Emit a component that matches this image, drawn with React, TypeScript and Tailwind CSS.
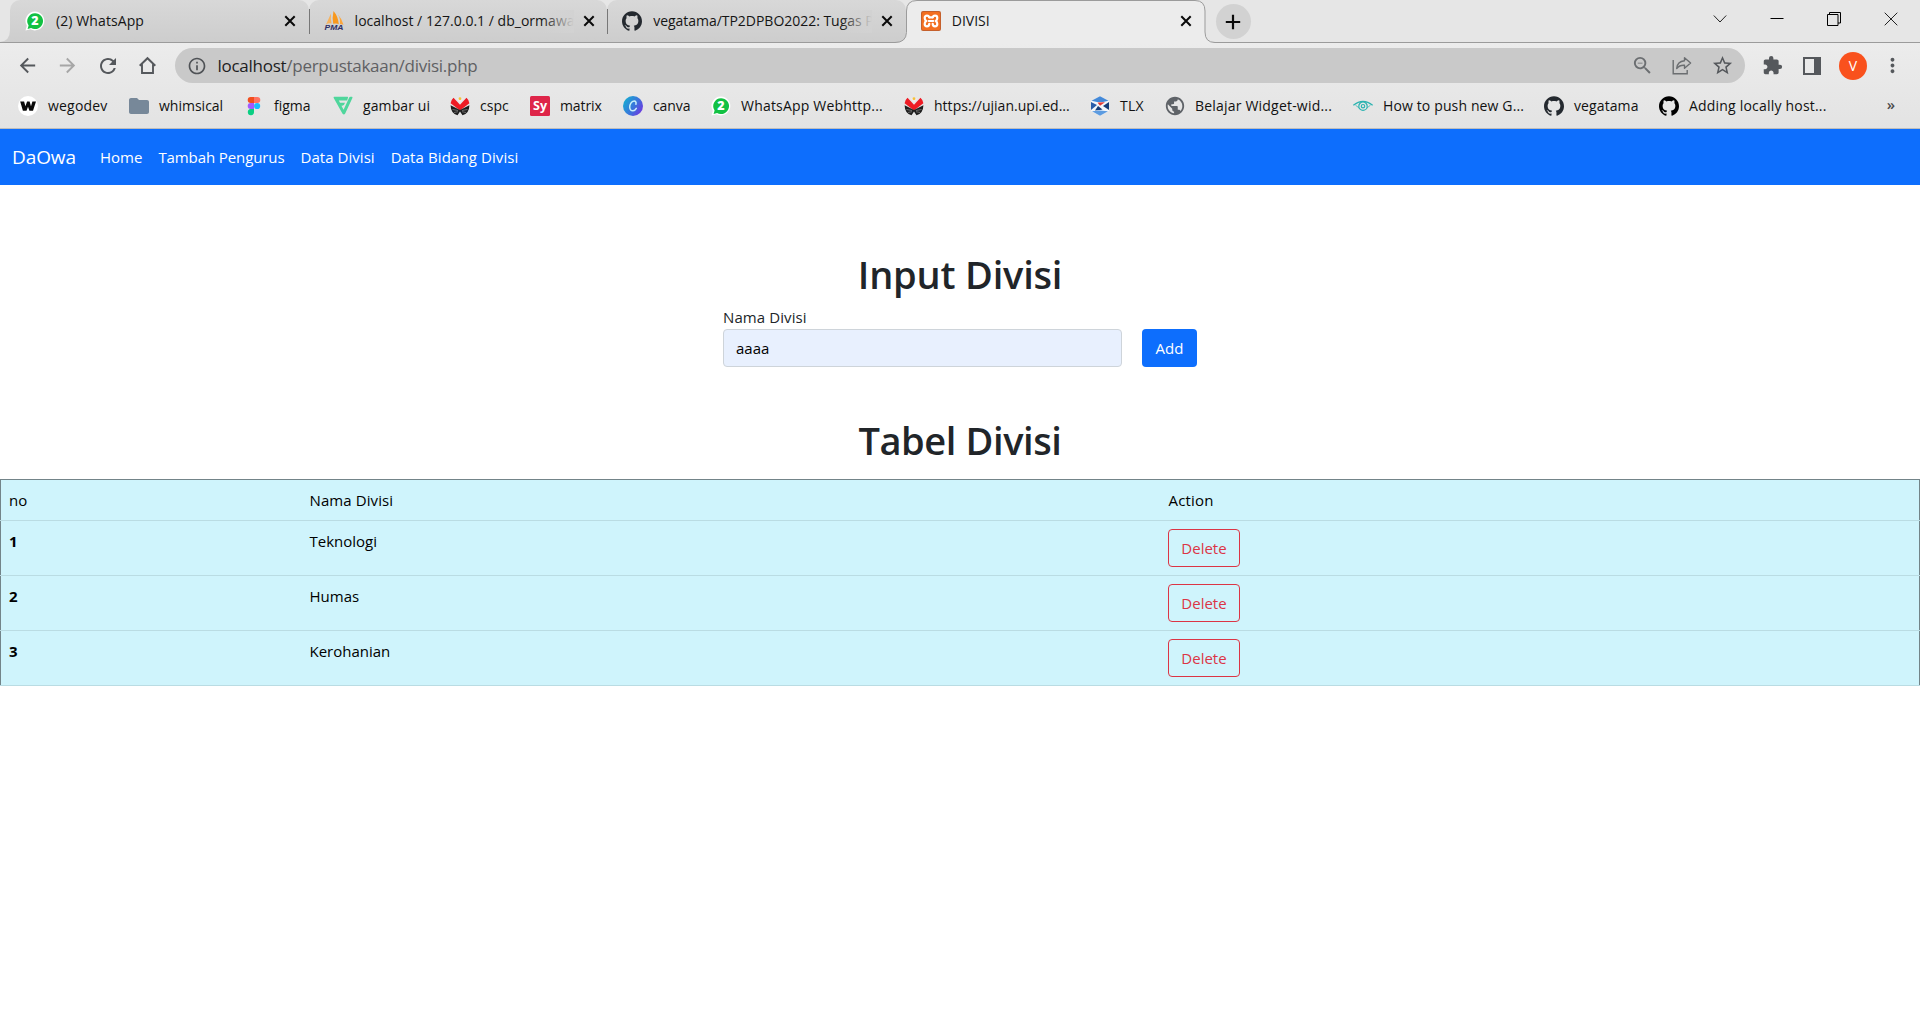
import type { ReactNode } from "react";
import { MdArrowBack, MdArrowForward, MdRefresh, MdInfoOutline, MdZoomOut, MdStarBorder, MdExtension, MdMoreVert, MdFolder, MdPublic } from "react-icons/md";
import { SiGithub } from "react-icons/si";

function WhatsAppIcon() {
  return (
    <svg viewBox="0 0 20 20" className="size-5 shrink-0">
      <path d="M10 .6a9.4 9.4 0 1 1-4.5 17.7L.5 19.6l1.3-4.9A9.4 9.4 0 0 1 10 .6z" fill="#fff" />
      <path d="M10 2.2a7.9 7.9 0 1 1-3.9 14.7L2.6 18l1-3.5A7.9 7.9 0 0 1 10 2.2z" fill="#12c143" />
      <text x="10" y="14.4" textAnchor="middle" fontSize="12.5" fontWeight="800" fill="#fff" fontFamily="Open Sans, sans-serif">2</text>
    </svg>
  );
}

function PmaIcon() {
  return (
    <svg viewBox="0 0 20 20" className="size-5 shrink-0 overflow-visible">
      <path d="M7 2.5 2 13.4q3-1.6 5.6-.8Q6.4 8 7 2.5z" fill="#f7b25c" />
      <path d="M9.5 0Q8 7 9.2 12.8q3.8-.8 5.6.4Q14 5 9.5 0z" fill="#f8981d" />
      <path d="M14 3.5q2.5 4 2 9.6l3.5.6Q18 8 14 3.5z" fill="#fba63c" />
      <text x="10" y="19.4" textAnchor="middle" fontSize="7" fontWeight="800" fontStyle="italic" textLength="19" lengthAdjust="spacingAndGlyphs" fill="#2f2f63" fontFamily="Liberation Sans, sans-serif">PMA</text>
    </svg>
  );
}

function XamppIcon() {
  return (
    <svg viewBox="0 0 20 20" className="size-5 shrink-0">
      <rect width="20" height="20" rx="2" fill="#c5602c" />
      <rect x="1" y="1" width="18" height="18" rx="1.5" fill="#f37021" />
      <g fill="none" stroke="#fff" strokeWidth="2.2" strokeLinecap="round" strokeLinejoin="round">
        <path d="M8.3 6.300Q7.800 4.700 6 4.700 3.700 4.700 3.700 7 3.700 9 5.200 10 3.700 11 3.700 13 3.700 15.300 6 15.300 8.300 15.300 8.300 12.800" />
        <path d="M11.700 6.300Q12.200 4.700 14 4.700 16.300 4.700 16.300 7 16.300 9 14.800 10 16.300 11 16.300 13 16.300 15.300 14 15.300 11.700 15.300 11.700 12.800" />
        <path d="M8.300 6.300h3.400M7.700 10h4.600" />
      </g>
    </svg>
  );
}

function WegodevIcon() {
  return (
    <svg viewBox="0 0 20 20" className="size-5 shrink-0">
      <circle cx="10" cy="10" r="10" fill="#fff" />
      <path d="M2.2 5.5h3.9l1.3 4.8 1.7-4.8h2.5l1.4 4.8 1.4-4.8h3.6L15 14.7h-3.6L10 10.8l-1.5 3.9H4.9z" fill="#0b0b0b" />
    </svg>
  );
}

function FigmaIcon() {
  return (
    <svg viewBox="0 0 20 20" className="size-5 shrink-0">
      <path d="M10 1H6.7a3 3 0 0 0 0 6H10z" fill="#f24e1e" />
      <path d="M10 1h3.3a3 3 0 0 1 0 6H10z" fill="#ff7262" />
      <path d="M10 7H6.7a3 3 0 0 0 0 6H10z" fill="#a259ff" />
      <circle cx="13.1" cy="10" r="3.1" fill="#1abcfe" />
      <path d="M10 13H6.7a3.1 3.1 0 1 0 3.3 3z" fill="#0acf83" />
    </svg>
  );
}

function GambarIcon() {
  return (
    <svg viewBox="0 0 20 20" className="size-5 shrink-0">
      <path d="M1.300.800h13.200q1 0 .5 1l-.9 2.600H5.800l1.200 2.300H12q-.8 3-2.800 3H8.400l2.200 4L16 2Q16.500.800 17.600.800h1.100q1.200 0 .7 1.200l-7.200 15.400q-1.300 2.200-2.800 0L.700 2Q.200.900 1.300.800z" fill="#4fd69c" />
    </svg>
  );
}

function UpiIcon() {
  return (
    <svg viewBox="0 0 20 20" className="size-5 shrink-0">
      <path d="M3.5 1.8Q1 4 .6 7.3L10 14.5l9.400-7.200Q19 4 16.500 1.800L10 8.800z" fill="#ee1c25" />
      <path d="M6.600 1.400q1 4 3.400 5.400 2.400-1.400 3.400-5.400l-1.800 1.200L10 1.300 8.400 2.600z" fill="#f3e9e9" />
      <circle cx="10" cy="2.700" r="1.400" fill="#f5c23a" />
      <path d="M.6 9.200 10 14l9.400-4.800Q19.200 17.500 12.500 19.300L10 15.500l-2.500 3.800Q.8 17.500.6 9.200z" fill="#1d1d1d" />
      <path d="m2.500 13.500 5.500 1M4 16.500l4-.8M17.500 13.500l-5.500 1M16 16.500l-4-.8" stroke="#bbb" strokeWidth=".5" />
    </svg>
  );
}

function MatrixIcon() {
  return (
    <svg viewBox="0 0 20 20" className="size-5 shrink-0">
      <rect width="20" height="20" rx="1.5" fill="#de2549" />
      <text x="10" y="14.2" textAnchor="middle" fontSize="12.5" fontWeight="700" fill="#fff" fontFamily="Open Sans, sans-serif">Sy</text>
    </svg>
  );
}

function CanvaIcon() {
  return (
    <svg viewBox="0 0 20 20" className="size-5 shrink-0">
      <defs>
        <linearGradient id="canva" x1="0" y1=".2" x2="1" y2=".8">
          <stop offset="0" stopColor="#14aed0" />
          <stop offset=".55" stopColor="#3b74dc" />
          <stop offset="1" stopColor="#7333e0" />
        </linearGradient>
      </defs>
      <circle cx="10" cy="10" r="10" fill="url(#canva)" />
      <path d="M12.9 8.200c.6-1.900-.3-3.200-1.900-3.100-2.500.1-4.400 3.200-4.300 6.200.1 2.400 1.500 3.700 3.300 3.500 1.500-.1 2.600-1.100 3.300-2.400" fill="none" stroke="#c9f0fa" strokeWidth="1.5" strokeLinecap="round" />
    </svg>
  );
}

function TlxIcon() {
  return (
    <svg viewBox="0 0 20 20" className="size-5 shrink-0">
      <path d="M10 .2 19 5v10l-9 4.800L1 15V5z" fill="#f4f7fb" />
      <path d="M10 .2 18.500 4.700 13 6H7L1.500 4.700z" fill="#4489d8" />
      <path d="m1 6 6 3-6 5z" fill="#2a5ca8" />
      <path d="M19 6v8l-6-4z" fill="#173d79" />
      <path d="m7.500 6.500 7.500-.2-5 3.500z" fill="#e43a35" />
      <path d="m8 10 4.500 3.500L10 14l-5 .5z" fill="#173d79" />
      <path d="m2 15.300 8-.8 8 .8-8 4.500z" fill="#5c9be0" />
    </svg>
  );
}

function EyeIcon() {
  return (
    <svg viewBox="0 0 20 20" className="size-5 shrink-0" fill="none" stroke="#2bb3b0">
      <path d="M.3 9.200Q10 1.700 19.700 9.200" strokeWidth="1.2" />
      <path d="M2.800 9.200Q4.800 11.500 6 12" strokeWidth=".8" />
      <path d="M17.200 9.200Q15.200 11.500 14 12" strokeWidth=".8" />
      <circle cx="10" cy="10.2" r="4.2" strokeWidth="1.2" />
      <circle cx="10" cy="10.2" r="1.7" strokeWidth="1.2" />
    </svg>
  );
}

function ShareIcon() {
  return (
    <svg viewBox="0 0 20 20" className="size-5 shrink-0" fill="none" stroke="#6b6e71" strokeWidth="1.4">
      <path d="M1.200 4v13.800h14V14" />
      <path d="M12.500 1.700 18.600 7l-6.100 5.200V9.300Q7.500 9 4.700 12.500 5.300 5.500 12.500 4.800z" strokeLinejoin="round" />
    </svg>
  );
}

function CloseIcon() {
  return (
    <svg viewBox="0 0 12 12" className="size-3 shrink-0" stroke="#0a0a0a" strokeWidth="2">
      <path d="m1.300 1.300 9.400 9.400M10.700 1.300l-9.400 9.400" />
    </svg>
  );
}

type TabProps = { icon: ReactNode; title: string; label: string; divider?: boolean; fade?: boolean; flare?: boolean };

function Tab({ icon, title, label, divider, fade, flare }: TabProps) {
  return (
    <div className="relative flex h-[42px] w-[298.6px] shrink-0 items-center rounded-t-[10px] bg-linear-to-b from-[#d8d8d8] to-[#cdcdcd] pl-[15px]">
      {flare && (
        <svg viewBox="0 0 10 12" className="absolute bottom-0 left-[-10px] h-3 w-[10px]">
          <path d="M10 0Q10 11 0 12H10z" fill="#cfcfcf" />
        </svg>
      )}
      {icon}
      <span className={`relative ml-[11px] w-[219px] overflow-hidden whitespace-nowrap pb-0.5 text-[14px] text-[#151515] ${label}`}>
        {title}
        {fade && <span className="absolute inset-y-0 right-0 w-8 bg-linear-to-r from-transparent to-[#d2d2d2]" />}
      </span>
      <span className="ml-[9px] flex"><CloseIcon /></span>
      {divider && <span className="absolute right-[-1px] top-[9px] z-10 h-[25px] w-px bg-[#777]" />}
    </div>
  );
}

function TabStrip() {
  return (
    <div className="flex h-[43px] border-b border-[#9b9b9b] bg-[#e6e6e6] pl-[10px]">
      <Tab icon={<WhatsAppIcon />} title="(2) WhatsApp" label="tracking-[0.1px]" divider flare />
      <Tab icon={<PmaIcon />} title="localhost / 127.0.0.1 / db_ormawa" label="tracking-[0.02px]" divider fade />
      <Tab icon={<SiGithub className="size-5 shrink-0 text-[#24292f]" />} title="vegatama/TP2DPBO2022: Tugas P" label="tracking-[-0.03px]" fade />
      <div className="relative flex h-[43px] w-[300px] shrink-0 items-center pl-[15px]">
        <svg viewBox="0 0 320 44" className="absolute left-[-11px] top-0 h-[44px] w-[320px]">
          <path d="M0 42.500q11 0 11.500-10V11Q11.500.5 22 .5h278q10 0 10 10.500v21q0 10.500 10 10.500V44H0z" fill="#ececec" />
          <path d="M0 42.500q11 0 11.500-10V11Q11.500.5 22 .5h278q10 0 10 10.500v21q0 10.500 10 10.500" fill="none" stroke="#9b9b9b" />
        </svg>
        <span className="relative flex w-full items-center pb-px">
          <XamppIcon />
          <span className="ml-[11px] w-[219px] pb-0.5 text-[14px] text-[#151515]">DIVISI</span>
          <span className="ml-[9px] flex"><CloseIcon /></span>
        </span>
      </div>
      <div className="ml-[10px] mt-1 flex size-[35px] items-center justify-center rounded-full bg-[#d2d2d2]">
        <svg viewBox="0 0 16 16" className="size-4" stroke="#0a0a0a" strokeWidth="2.2"><path d="M8 .8v14.400M.8 8h14.400" /></svg>
      </div>
      <div className="ml-auto flex h-[37px] items-center gap-[43px] pr-[22px]">
        <svg viewBox="0 0 14 14" className="size-[14px]" fill="none" stroke="#222"><path d="m.8 3.500 6.200 6.500 6.200-6.500" /></svg>
        <svg viewBox="0 0 14 14" className="size-[14px]" fill="none" stroke="#000"><path d="M.5 6.500h13" /></svg>
        <svg viewBox="0 0 14 14" className="size-[14px]" fill="none" stroke="#000"><path d="M.5 2.500h10.500v11H.5zM2.500 2.500v-2h11v10.500H11" /></svg>
        <svg viewBox="0 0 14 14" className="size-[14px]" fill="none" stroke="#222"><path d="m.7.700 12.600 12.600M13.300.700.7 13.300" /></svg>
      </div>
    </div>
  );
}

function Toolbar() {
  return (
    <div className="flex h-[45px] items-center text-[#55585c]">
      <MdArrowBack className="ml-[16px] size-[23px]" />
      <MdArrowForward className="ml-[17px] size-[23px] text-[#a6a6a6]" />
      <MdRefresh className="ml-[17px] size-[24px]" />
      <svg viewBox="0 0 23 23" className="ml-[16px] size-[23px]" fill="none" stroke="currentColor" strokeWidth="1.9">
        <path d="M3.700 11.800 11.500 4.200l7.800 7.600M6 10v9h11v-9" />
      </svg>
      <div className="ml-[16px] flex h-[35px] w-[1570px] items-center rounded-full bg-[#c9c9c9]">
        <MdInfoOutline className="ml-[12px] size-[20px] text-[#4f5256]" />
        <span className="ml-[10.5px] text-[17px] tracking-[-0.27px] text-[#5f6063]"><span className="text-[#1d1d1f]">localhost</span>/perpustakaan/divisi.php</span>
        <MdZoomOut className="ml-auto size-[23px] text-[#6b6e71]" />
        <span className="ml-[18px]"><ShareIcon /></span>
        <MdStarBorder className="ml-[19px] mr-[11px] size-[23px]" />
      </div>
      <MdExtension className="ml-[17px] size-[21px]" />
      <svg viewBox="0 0 18 18" className="ml-[20px] size-[18px]"><path d="M0 0h18v18H0zM2 2v14h9V2z" fill="currentColor" fillRule="evenodd" /></svg>
      <div className="ml-[18px] flex size-[28px] items-center justify-center rounded-full bg-[#f9511d] text-[14px] text-white">V</div>
      <MdMoreVert className="ml-[14px] size-[23px]" />
    </div>
  );
}

const bookmarks = [
  { label: "wegodev", icon: <WegodevIcon />, width: "w-[111px]", track: "tracking-[0.2px]" },
  { label: "whimsical", icon: <MdFolder className="size-6 -mx-0.5 shrink-0 text-[#778899]" />, width: "w-[115px]", track: "tracking-[0px]" },
  { label: "figma", icon: <FigmaIcon />, width: "w-[89px]", track: "tracking-[0px]" },
  { label: "gambar ui", icon: <GambarIcon />, width: "w-[117px]", track: "tracking-[0.1px]" },
  { label: "cspc", icon: <UpiIcon />, width: "w-[80px]", track: "tracking-[0px]" },
  { label: "matrix", icon: <MatrixIcon />, width: "w-[93px]", track: "tracking-[-0.1px]" },
  { label: "canva", icon: <CanvaIcon />, width: "w-[88px]", track: "tracking-[-0.1px]" },
  { label: "WhatsApp Webhttp...", icon: <WhatsAppIcon />, width: "w-[193px]", track: "tracking-[0.2px]" },
  { label: "https://ujian.upi.ed...", icon: <UpiIcon />, width: "w-[186px]", track: "tracking-[0.02px]" },
  { label: "TLX", icon: <TlxIcon />, width: "w-[75px]", track: "tracking-[0.2px]" },
  { label: "Belajar Widget-wid...", icon: <MdPublic className="size-[22px] -mx-px shrink-0 text-[#5f6368]" />, width: "w-[188px]", track: "tracking-[0.2px]" },
  { label: "How to push new G...", icon: <EyeIcon />, width: "w-[191px]", track: "tracking-[0.13px]" },
  { label: "vegatama", icon: <SiGithub className="size-5 shrink-0 text-[#24292f]" />, width: "w-[115px]", track: "tracking-[0.1px]" },
  { label: "Adding locally host...", icon: <SiGithub className="size-5 shrink-0 text-black" />, width: "w-[200px]", track: "tracking-[0.2px]" },
];

function BookmarkBar() {
  return (
    <div className="flex h-[41px] items-center border-b border-[#bdbdbd] pl-[18px] pb-1">
      {bookmarks.map((b) => (
        <div key={b.label} className={`flex shrink-0 items-center gap-2.5 ${b.width}`}>
          {b.icon}
          <span className={`whitespace-nowrap pb-px text-[14px] text-[#111] ${b.track}`}>{b.label}</span>
        </div>
      ))}
      <span className="ml-auto mr-[25px] pb-1 text-[15px] font-semibold text-[#4a4a4a]">»</span>
    </div>
  );
}

function Navbar() {
  return (
    <nav className="flex h-14 items-center bg-[#0d6efd] pl-3 text-white">
      <span className="w-[88px] text-[19px] tracking-[-0.1px]">DaOwa</span>
      <div className="flex gap-4 text-[15px]">
        <a>Home</a>
        <a className="tracking-[-0.1px]">Tambah Pengurus</a>
        <a className="tracking-[0.05px]">Data Divisi</a>
        <a className="tracking-[0.1px]">Data Bidang Divisi</a>
      </div>
    </nav>
  );
}

const rows = ["Teknologi", "Humas", "Kerohanian"];

export default function App() {
  return (
    <div className="h-[1020px] w-[1920px] overflow-hidden bg-white font-['Open_Sans',sans-serif] text-[#212529]">
      <TabStrip />
      <div className="bg-linear-to-b from-[#ececec] to-[#e3e3e3]">
        <Toolbar />
        <BookmarkBar />
      </div>
      <Navbar />
      <h1 className="mt-[65px] text-center text-[38px] leading-[48px] font-semibold tracking-[-0.2px]">Input Divisi</h1>
      <div className="mx-auto mt-[7px] w-[474px] text-[15px] leading-6">
        <label className="block tracking-[0.1px]">Nama Divisi</label>
        <div className="flex justify-between">
          <div className="flex h-[38px] w-[399px] items-center rounded border border-[#ced4da] bg-[#e8f0fe] px-3 text-black">aaaa</div>
          <button className="h-[38px] w-[55px] rounded bg-[#0d6efd] text-white">Add</button>
        </div>
      </div>
      <h1 className="mt-[49px] text-center text-[38px] leading-[48px] font-semibold tracking-[-0.4px]">Tabel Divisi</h1>
      <div className="mt-[15px] border-x border-t border-[#738489] bg-[#cff4fc] text-[15px] leading-6 text-black">
        <div className="-mx-px flex h-[41px] border-b border-[#badce3] pl-[9px] pt-2">
          <span className="w-[300.5px]">no</span>
          <span className="w-[859px] tracking-[0.1px]">Nama Divisi</span>
          <span className="tracking-[0.2px]">Action</span>
        </div>
        {rows.map((name, i) => (
          <div key={name} className="-mx-px flex h-[55px] border-b border-[#badce3] pl-[9px] pt-2">
            <span className="w-[300.5px] font-bold">{i + 1}</span>
            <span className="w-[858.5px]">{name}</span>
            <button className="h-[38px] w-[72px] rounded border border-[#dc3545] text-[#dc3545]">Delete</button>
          </div>
        ))}
      </div>
    </div>
  );
}
